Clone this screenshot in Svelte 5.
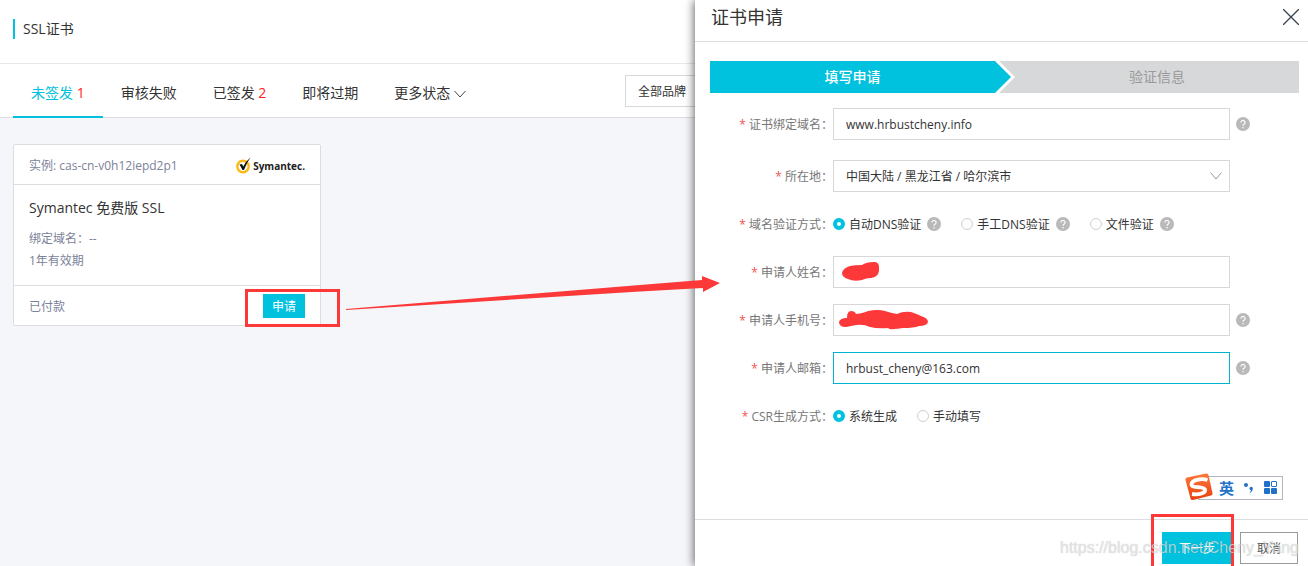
<script lang="ts">
  const tabs = [
    { name: "未签发", count: 1 },
    { name: "审核失败" },
    { name: "已签发", count: 2 },
    { name: "即将过期" },
    { name: "更多状态", more: true },
  ];

  const verifyTypes = ["自动DNS验证", "手工DNS验证", "文件验证"];
  const csrTypes = ["系统生成", "手动填写"];

  let active = $state(0);
  let domain = $state("www.hrbustcheny.info");
  let email = $state("hrbust_cheny@163.com");
  let verify = $state(verifyTypes[0]);
  let csr = $state(csrTypes[0]);
</script>

{#snippet help()}
  <svg class="help" viewBox="0 0 14 14" role="img" aria-label="帮助">
    <circle cx="7" cy="7" r="7" fill="#b9b9b9" />
    <path d="M4.9 5.4a2.1 2 0 1 1 3.3 1.7Q7 7.8 7 8.8" fill="none" stroke="#fff" stroke-width="1.2" />
    <rect x="6.4" y="10" width="1.3" height="1.3" fill="#fff" />
  </svg>
{/snippet}

<div class="page">
  <main>
    <header class="top">
      <h1>SSL证书</h1>
    </header>

    <nav>
      {#each tabs as tab, i}
        <button class="tab" class:active={active === i} onclick={() => (active = i)}>
          {tab.name}
          {#if tab.count}<span class="count">{tab.count}</span>{/if}
          {#if tab.more}
            <svg width="12" height="8" viewBox="0 0 12 8"><path d="M.5 1 6 7l5.500-6" fill="none" stroke="#444" /></svg>
          {/if}
        </button>
      {/each}
      <select class="brand" aria-label="品牌">
        <option>全部品牌</option>
      </select>
    </nav>

    <section class="card">
      <div class="card-head">
        <span>实例: cas-cn-v0h12iepd2p1</span>
        <span class="logo">
          <svg width="17" height="17" viewBox="0 0 17 17">
            <circle cx="7" cy="9.500" r="5.700" fill="#fff" stroke="#fdb913" stroke-width="2.400" />
            <path d="M3.500 7.500 6 7l1.300 2.600Q10 4 14.500.5 10.500 6 8 13H6.500Z" fill="#111" />
          </svg>
          <b>Symantec.</b>
        </span>
      </div>
      <div class="card-body">
        <h2>Symantec 免费版 SSL</h2>
        <p>绑定域名：--</p>
        <p>1年有效期</p>
      </div>
      <div class="card-foot">
        <span>已付款</span>
        <button class="apply">申请</button>
      </div>
    </section>
  </main>

  <aside>
    <header class="drawer-head">
      <h2>证书申请</h2>
      <button class="close" aria-label="关闭">
        <svg width="16" height="16" viewBox="0 0 16 16"><path d="M0 0 16 16M16 0 0 16" stroke="#37424f" stroke-width="1.300" /></svg>
      </button>
    </header>

    <div class="steps">
      <div class="step current"><span>填写申请</span></div>
      <div class="step">验证信息</div>
    </div>

    <form>
      <div class="row first">
        <label for="domain"><i>*</i> 证书绑定域名：</label>
        <input id="domain" type="text" bind:value={domain} />
        {@render help()}
      </div>
      <div class="row">
        <label for="area"><i>*</i> 所在地：</label>
        <div class="select">
          <select id="area">
            <option>中国大陆 / 黑龙江省 / 哈尔滨市</option>
          </select>
          <svg width="12" height="8" viewBox="0 0 12 8"><path d="M.5.5 6 7l5.500-6.500" fill="none" stroke="#999" /></svg>
        </div>
      </div>
      <div class="row" role="radiogroup" aria-labelledby="verify-label">
        <span class="label" id="verify-label"><i>*</i> 域名验证方式：</span>
        <div class="radios">
          {#each verifyTypes as v}
            <span class="choice">
              <label><input type="radio" name="verify" value={v} bind:group={verify} /><span>{v}</span></label>
              {@render help()}
            </span>
          {/each}
        </div>
      </div>
      <div class="row">
        <label for="name"><i>*</i> 申请人姓名：</label>
        <input id="name" type="text" />
      </div>
      <div class="row">
        <label for="phone"><i>*</i> 申请人手机号：</label>
        <input id="phone" type="text" />
        {@render help()}
      </div>
      <div class="row">
        <label for="email"><i>*</i> 申请人邮箱：</label>
        <input id="email" class="focused" type="text" bind:value={email} />
        {@render help()}
      </div>
      <div class="row" role="radiogroup" aria-labelledby="csr-label">
        <span class="label" id="csr-label"><i>*</i> CSR生成方式：</span>
        <div class="radios">
          {#each csrTypes as c}
            <label><input type="radio" name="csr" value={c} bind:group={csr} /><span>{c}</span></label>
          {/each}
        </div>
      </div>
    </form>

    <footer>
      <button class="next">下一步</button>
      <button class="cancel">取消</button>
    </footer>
  </aside>

  <!-- input method bar -->
  <div class="ime">
    <svg class="ime-logo" width="30" height="28" viewBox="0 0 30 28">
      <defs>
        <linearGradient id="orange" x1="0" y1="0" x2="0" y2="1">
          <stop offset="0" stop-color="#ff7a3c" />
          <stop offset="1" stop-color="#e8400c" />
        </linearGradient>
      </defs>
      <path d="M3 4.500 22 .5q2-.4 2.500 1.500l4 18q.4 2-1.500 2.500L9 27q-2 .4-2.500-1.500L1.500 7Q1 5 3 4.500Z" fill="url(#orange)" />
      <path d="M23.500 7C17 5 7.500 7 7.500 11.500c0 4 12 1.500 13.500 5 1 3.500-6 5.500-13 4.500" fill="none" stroke="#fff" stroke-width="3.800" />
    </svg>
    <b>英</b>
    <svg width="10" height="12" viewBox="0 0 10 12">
      <circle cx="2" cy="3" r="2" fill="#1f72c8" />
      <path d="M5.500 6.500a1.700 1.700 0 1 1 3.400 0q0 3-2.900 4.500l-.3-.8q1.300-.9 1.300-2-1.500-.1-1.500-1.700Z" fill="#1f72c8" />
    </svg>
    <svg width="14" height="14" viewBox="0 0 14 14" fill="#1f72c8">
      <rect width="6" height="6" rx="1" />
      <rect x="7.500" y=".5" width="5" height="5" rx=".5" fill="none" stroke="#1f72c8" />
      <rect y="7" width="6" height="6" rx="1" />
      <rect x="7" y="7" width="6" height="6" rx="1" />
    </svg>
  </div>

  <!-- red pen marks -->
  <svg class="marks" width="1308" height="566" viewBox="0 0 1308 566" fill="#fd3838">
    <rect x="246.500" y="290.500" width="92" height="35" fill="none" stroke="#fd3838" stroke-width="3" />
    <rect x="1152.500" y="515.500" width="80" height="52" fill="none" stroke="#fd3838" stroke-width="3" />
    <path d="M346 309 640 285 702 280V276L720 283 703 292V288L640 291.500 346 310Z" />
    <path d="M842 273q1-5 8-7 5-1 12-1 4-3 12-3 5 0 5 5v4q-1 6-8 7-5 0-9 2-8 2-14-1-6-2-6-6Z" />
    <path d="M839 322q1-4 8-4 0-7 4-7 4 0 5 3 8-1 12-3 10-2 17 0 6 2 12 3 6-3 14-2 6 2 10 4 7 2 7 6-1 4-9 4-5 2-16 2-6 1-9 1-4 1-6-1-10 1-18-1-6-3-14-2-5 1-10 2-7 0-7-5Z" />
  </svg>

  <div class="watermark">https://blog.csdn.net/Cheny_Yang</div>
</div>

<style>
  :global(body) {
    margin: 0;
    font: 12px/22px "Open Sans", "Noto Sans CJK SC", sans-serif;
    color: #333;
  }

  .page {
    position: relative;
    display: grid;
    grid-template-columns: 695fr 613fr;
    min-height: 100vh;
    overflow: hidden;
  }

  button,
  input,
  select {
    box-sizing: border-box;
    margin: 0;
    padding: 0;
    border: 0;
    background: none;
    font: inherit;
    color: inherit;
    white-space: nowrap;
  }

  h1,
  h2,
  p {
    margin: 0;
    font-weight: normal;
  }

  main {
    min-width: 0;
    overflow: hidden;
    background: #f4f6fa;
  }

  .top {
    padding: 19px 13px 24px;
    background: #fff;
    border-bottom: 1px solid #e8e8e8;
  }

  h1 {
    padding-left: 8px;
    border-left: 2px solid #00c1de;
    font-size: 14px;
    line-height: 20px;
  }

  nav {
    display: flex;
    align-items: flex-start;
    height: 53px;
    padding-left: 13px;
    background: #fff;
    border-bottom: 1px solid #dcdcdc;
  }

  .tab {
    flex: none;
    height: 54px;
    padding: 6px 18px 0;
    border-bottom: 2px solid transparent;
    font-size: 14px;
  }

  .tab.active {
    color: #00c1de;
    border-color: #00c1de;
  }

  .count {
    color: #f22;
  }

  .brand {
    flex: none;
    width: 120px;
    height: 32px;
    margin: 11px -50px 0 auto;
    padding: 2px 0 0 12px;
    border: 1px solid #d7d8d9;
    appearance: none;
  }

  .card {
    width: 306px;
    margin: 26px 13px;
    background: #fff;
    border: 1px solid #dcdddf;
    border-radius: 2px;
    color: #7b8299;
  }

  .card-head,
  .card-foot {
    display: flex;
    align-items: center;
    justify-content: space-between;
    height: 39px;
    padding: 0 15px;
  }

  .card-head > span,
  .card-foot > span {
    padding-top: 2px;
  }

  .card-head {
    border-bottom: 1px solid #dcdddf;
  }

  .card-foot {
    border-top: 1px solid #dcdddf;
  }

  .card-body {
    padding: 12px 15px 13px;
  }

  .card-body h2 {
    margin-bottom: 9px;
    font-size: 14px;
    color: #333;
  }

  .logo {
    display: flex;
    align-items: center;
    color: #222;
    font-size: 10px;
  }

  .apply {
    width: 42px;
    height: 24px;
    padding-top: 2px;
    background: #00c1de;
    color: #fff;
  }

  aside {
    position: relative;
    display: flex;
    flex-direction: column;
    min-width: 0;
    background: #fff;
    box-shadow: -1px 0 9px rgba(0, 0, 0, 0.6);
  }

  .drawer-head {
    display: flex;
    align-items: center;
    justify-content: space-between;
    height: 41px;
    padding: 0 9px 0 16px;
    border-bottom: 1px solid #dcdde0;
  }

  .drawer-head h2 {
    padding-bottom: 8px;
    font-size: 18px;
  }

  .close {
    display: flex;
    padding-bottom: 8px;
  }

  .steps {
    display: grid;
    grid-template-columns: 305fr 284fr;
    margin: 19px 9px 15px 15px;
    background: #d7d8d9;
    font-size: 14px;
    line-height: 32px;
    text-align: center;
    color: #999;
  }

  .step.current {
    padding-right: 4px;
    background: #fff;
    color: #fff;
    font-weight: 500;
    clip-path: polygon(0 0, calc(100% - 16px) 0, 100% 50%, calc(100% - 16px) 100%, 0 100%);
  }

  .step.current span {
    display: block;
    padding-right: 16px;
    background: #00c1de;
    clip-path: polygon(0 0, calc(100% - 16px) 0, 100% 50%, calc(100% - 16px) 100%, 0 100%);
  }

  form {
    display: grid;
    gap: 16px;
    padding: 0 9px 0 15px;
  }

  .row {
    display: grid;
    grid-template-columns: 117px 1fr 63px;
    align-items: center;
    gap: 6px;
    height: 32px;
  }

  .row.first {
    margin-bottom: 4px;
  }

  .row > label,
  .label {
    margin-right: -6px;
    padding-top: 2px;
    text-align: right;
    white-space: nowrap;
    color: #777;
  }

  i {
    font-style: normal;
    color: #f15353;
  }

  input[type="text"],
  .select select {
    width: 100%;
    height: 32px;
    padding: 0 12px;
    border: 1px solid #d7d8d9;
    outline: none;
    appearance: none;
  }

  .select select {
    padding-top: 2px;
  }

  input.focused {
    border-color: #00b4cf;
  }

  .select {
    display: grid;
    align-items: center;
  }

  .select > * {
    grid-area: 1 / 1;
  }

  .select svg {
    justify-self: end;
    margin-right: 8px;
    pointer-events: none;
  }

  .help {
    width: 14px;
    height: 14px;
  }

  .radios,
  .choice,
  .radios label {
    display: flex;
    align-items: center;
    white-space: nowrap;
  }

  .radios {
    gap: 20px;
  }

  .choice {
    gap: 6px;
  }

  .radios label {
    gap: 4px;
  }

  .radios label span {
    padding-top: 2px;
  }

  input[type="radio"] {
    width: 12px;
    height: 12px;
    border: 1px solid #d0d0d0;
    border-radius: 50%;
    appearance: none;
  }

  input[type="radio"]:checked {
    border: 4px solid #00c1de;
  }

  footer {
    display: flex;
    justify-content: flex-end;
    gap: 8px;
    margin-top: auto;
    padding: 12px 10px 2px;
    border-top: 1px solid #dcdde0;
  }

  .next {
    width: 70px;
    height: 32px;
    padding-top: 2px;
    background: #00c1de;
    color: #fff;
  }

  .cancel {
    width: 58px;
    height: 32px;
    padding-top: 2px;
    border: 1px solid #999;
    color: #555;
  }

  .ime {
    position: absolute;
    right: 25px;
    bottom: 66px;
    display: flex;
    align-items: center;
    gap: 10px;
    height: 22px;
    padding: 0 4px 0 20px;
    background: #fff;
    border: 1px solid #b1b5c0;
    color: #1f72c8;
    font-size: 15px;
  }

  .ime-logo {
    position: absolute;
    left: -15px;
    top: -4px;
  }

  .marks {
    position: absolute;
    left: 0;
    top: 0;
    pointer-events: none;
  }

  .watermark {
    position: absolute;
    right: 9px;
    bottom: 7px;
    font-family: "Liberation Sans", sans-serif;
    font-size: 16px;
    color: rgba(240, 240, 240, 0.7);
    text-shadow: 0 0 1px rgba(0, 0, 0, 0.25);
    pointer-events: none;
  }
</style>
